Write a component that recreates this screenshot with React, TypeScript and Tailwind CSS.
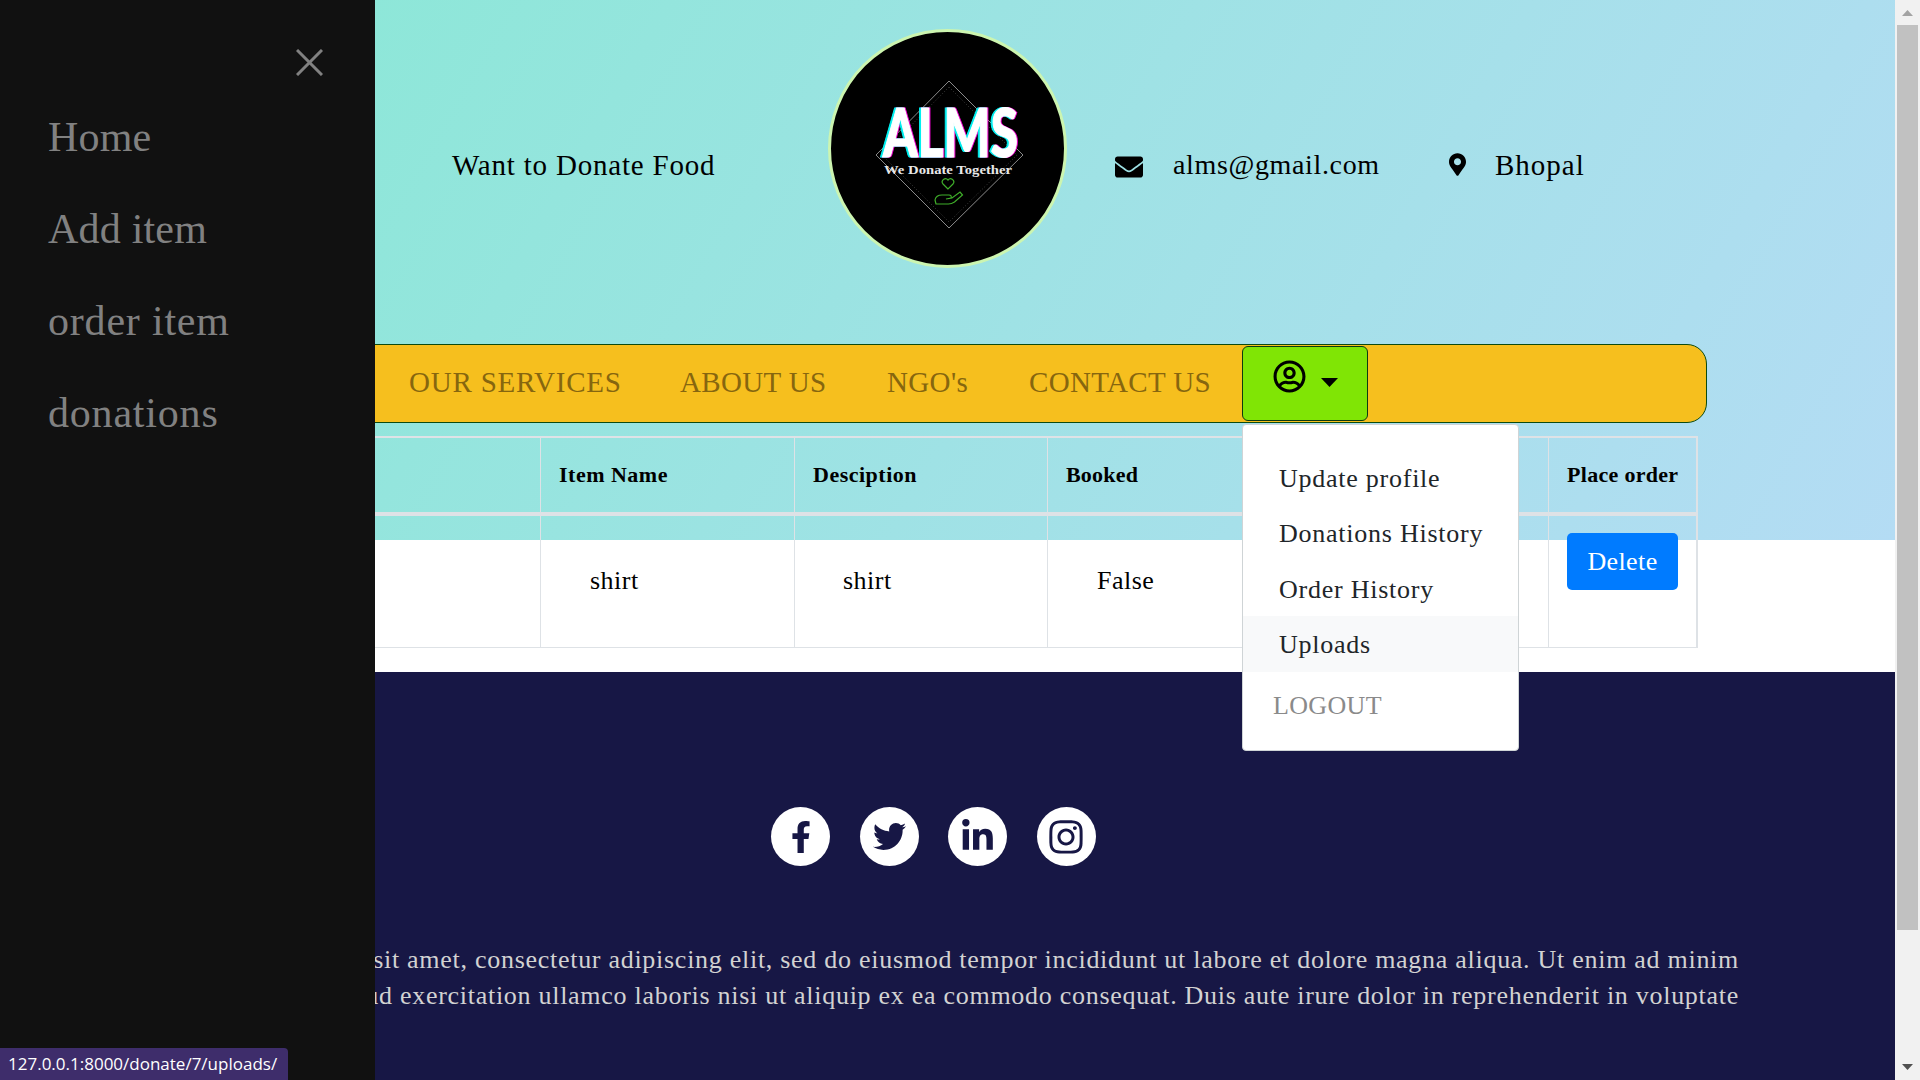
import React from 'react';
import {
  FaEnvelope,
  FaFacebookF,
  FaInstagram,
  FaLinkedinIn,
  FaMapMarkerAlt,
  FaRegUserCircle,
  FaTwitter,
} from 'react-icons/fa';

const serif = "font-['Liberation_Serif',serif]";

const Logo = () => (
  <svg viewBox="0 0 239 239" className="w-[239px] h-[239px] shrink-0">
    <circle cx="119.5" cy="119.5" r="118" fill="#000" stroke="#ccf5b0" strokeWidth="3" />
    <path d="M121 52 L195 126 L121 199 L48 126 Z" fill="none" stroke="#8a8a8a" strokeWidth="1" />
    <path d="M121 58 L189 126 L121 193 L54 126 Z" fill="none" stroke="#666" strokeWidth="0.6" strokeDasharray="1 2" />
    <text
      x="55"
      y="128"
      textLength="135"
      lengthAdjust="spacingAndGlyphs"
      fontFamily="Lato, sans-serif"
      fontWeight="900"
      fontSize="66"
      fill="#fff"
      stroke="#fff"
      strokeWidth="1.2"
      className="[filter:drop-shadow(-1.5px_0_0_#00f0f0)_drop-shadow(1.5px_0_0_#f000d0)]"
    >
      ALMS
    </text>
    <text x="56" y="145" textLength="128" lengthAdjust="spacingAndGlyphs" fontFamily="'Liberation Serif', serif" fontWeight="700" fontSize="13" fill="#e8e8e8">We Donate Together</text>
    <path d="M120 160 l-5 -5 a3.2 3.2 0 0 1 5 -4 a3.2 3.2 0 0 1 5 4 Z" fill="none" stroke="#3fae2a" strokeWidth="1.2" />
    <path d="M108 175 l-1 -4 q1 -5 7 -5 l7 0 q3 0 2 3 l-5 1 l6 -1 l8 -6 l2.5 3 l-8 7 q-3 2 -6 2 Z" fill="none" stroke="#3fae2a" strokeWidth="1.2" />
  </svg>
);

const Sidebar = () => (
  <aside className={`absolute left-0 top-0 z-20 h-full w-[375px] bg-[#111111] text-[#818181] ${serif}`}>
    <div className="flex justify-end pt-[49px] pr-[52px]">
      <svg viewBox="0 0 27 27" className="w-[27px] h-[27px]">
        <path d="M1 1 L26 26 M26 1 L1 26" stroke="#818181" strokeWidth="3" fill="none" />
      </svg>
    </div>
    <nav className="flex flex-col pl-[48px] pt-[41px] gap-[52px] text-[42px] leading-[40px] tracking-[0.2px]">
      <a>Home</a>
      <a>Add item</a>
      <a className="tracking-[0.8px]">order item</a>
      <a className="tracking-[0.8px]">donations</a>
    </nav>
  </aside>
);

const Dropdown = () => (
  <div className={`absolute left-0 top-[78px] z-10 w-[277px] h-[327px] rounded-[4px] border border-[#cfd4d6] bg-white pt-[25px] text-[#212529] text-[26px] tracking-[0.75px] ${serif}`}>
    <a className="flex items-center h-[55.4px] pl-[36px] pt-[2px]">Update profile</a>
    <a className="flex items-center h-[55.4px] pl-[36px] pt-[1px]">Donations History</a>
    <a className="flex items-center h-[55.4px] pl-[36px] pt-[2px]">Order History</a>
    <a className="flex items-center h-[55.4px] pl-[36px] pt-[2px] bg-[#f8f9fa]">Uploads</a>
    <a className="flex items-center h-[66px] pl-[30px] pt-[2px] text-[#8a8a8a] tracking-[0.35px]">LOGOUT</a>
  </div>
);

const Navbar = () => (
  <div className={`mt-[76px] flex items-center w-[1707px] h-[79px] pl-[408px] rounded-r-[20px] border border-[#0d4a10] bg-[#f6bf1e] text-[#86660f] text-[29px] tracking-[0.35px] ${serif}`}>
    <a className="w-[271px] pb-[2px] whitespace-nowrap tracking-[0.8px]">OUR SERVICES</a>
    <a className="w-[207px] pb-[2px] whitespace-nowrap">ABOUT US</a>
    <a className="w-[142px] pb-[2px] whitespace-nowrap">NGO's</a>
    <a className="w-[213px] pb-[2px] whitespace-nowrap">CONTACT US</a>
    <div className="relative">
      <button className="flex items-center w-[126px] h-[75px] pl-[30px] pb-[14px] rounded-[6px] border border-[#0d3a10] bg-[#80e505] text-black">
        <FaRegUserCircle className="w-[33px] h-[33px]" />
        <svg viewBox="0 0 17 9" className="ml-[15px] mt-[11px] w-[17px] h-[9px]">
          <path d="M0 0 H17 L8.5 9 Z" fill="#000" />
        </svg>
      </button>
      <Dropdown />
    </div>
  </div>
);

const Table = () => (
  <table className={`mt-[13px] ml-[33px] w-[1663px] table-fixed border-collapse text-black ${serif}`}>
    <colgroup>
      <col className="w-[254px]" />
      <col className="w-[253px]" />
      <col className="w-[254px]" />
      <col className="w-[253px]" />
      <col className="w-[253px]" />
      <col className="w-[248px]" />
      <col className="w-[148px]" />
    </colgroup>
    <thead>
      <tr className="h-[77px] text-[22px] font-bold tracking-[0.5px]">
        <th className="border-2 border-b-[4px] border-[#dee2e6] border-x-[1px]" />
        <th className="border-2 border-b-[4px] border-[#dee2e6] border-x-[1px]" />
        <th className="border-2 border-b-[4px] border-[#dee2e6] border-x-[1px] pl-[18px] pb-[2px] text-left">Item Name</th>
        <th className="border-2 border-b-[4px] border-[#dee2e6] border-x-[1px] pl-[18px] pb-[2px] text-left">Desciption</th>
        <th className="border-2 border-b-[4px] border-[#dee2e6] border-x-[1px] pl-[18px] pb-[2px] text-left tracking-[0.2px]">Booked</th>
        <th className="border-2 border-b-[4px] border-[#dee2e6] border-x-[1px]" />
        <th className="border-2 border-b-[4px] border-[#dee2e6] border-x-[1px] border-r-[2px] pl-[18px] pb-[2px] text-left whitespace-nowrap tracking-[0.3px]">Place order</th>
      </tr>
    </thead>
    <tbody>
      <tr className="h-[133px] text-[26px] tracking-[0.5px] align-top">
        <td className="border border-[#dee2e6]" />
        <td className="border border-[#dee2e6]" />
        <td className="border border-[#dee2e6] pl-[49px] pt-[45px]">shirt</td>
        <td className="border border-[#dee2e6] pl-[48px] pt-[45px]">shirt</td>
        <td className="border border-[#dee2e6] pl-[49px] pt-[45px]">False</td>
        <td className="border border-[#dee2e6]" />
        <td className="border border-[#dee2e6] border-r-[2px] pl-[18px] pt-[17px]">
          <button className="flex items-center justify-center w-[111px] h-[57px] rounded-[5px] bg-[#007bff] text-white text-[26px] tracking-[0.4px]">Delete</button>
        </td>
      </tr>
    </tbody>
  </table>
);

const socials = [
  { Icon: FaFacebookF, size: 'w-[32px] h-[32px]' },
  { Icon: FaTwitter, size: 'w-[33px] h-[33px]' },
  { Icon: FaLinkedinIn, size: 'w-[35px] h-[35px]' },
  { Icon: FaInstagram, size: 'w-[38px] h-[38px]' },
];

const Footer = () => (
  <footer className={`h-[408px] bg-[#171745] pt-[135px] ${serif}`}>
    <div className="flex pl-[771px] gap-[29.5px]">
      {socials.map(({ Icon, size }, i) => (
        <a key={i} className="flex items-center justify-center w-[59px] h-[59px] rounded-full bg-white text-[#171745]">
          <Icon className={size} />
        </a>
      ))}
    </div>
    <div className="mt-[76px] flex flex-col items-end pr-[156px] text-[26px] leading-[36px] text-[#d2d2d2] tracking-[0.72px] whitespace-nowrap">
      <p>Lorem ipsum dolor sit amet, consectetur adipiscing elit, sed do eiusmod tempor incididunt ut labore et dolore magna aliqua. Ut enim ad minim</p>
      <p>veniam, quis nostrud exercitation ullamco laboris nisi ut aliquip ex ea commodo consequat. Duis aute irure dolor in reprehenderit in voluptate</p>
    </div>
  </footer>
);

const Scrollbar = () => (
  <div className="flex flex-col items-center w-[25px] h-full shrink-0 bg-[#f1f1f1]">
    <svg viewBox="0 0 11 6" className="mt-[10px] w-[11px] h-[6px]">
      <path d="M5.5 0 L11 6 H0 Z" fill="#a3a3a3" />
    </svg>
    <div className="mt-[9px] w-[21px] h-[905px] bg-[#c1c1c1]" />
    <svg viewBox="0 0 11 6" className="mt-[134px] w-[11px] h-[6px]">
      <path d="M0 0 H11 L5.5 6 Z" fill="#505050" />
    </svg>
  </div>
);

const App = () => (
  <div className="relative flex h-[1080px] w-[1920px] overflow-hidden bg-white">
    <main className="w-[1895px] shrink-0">
      <section className="h-[540px] bg-[linear-gradient(120deg,#86e9d3_0%,#b4dcf4_100%)]">
        <div className={`flex items-start pt-[29px] pl-[452px] text-[28px] leading-[32px] text-black ${serif}`}>
          <span className="mt-[120px] w-[376px] whitespace-nowrap text-[29px] tracking-[0.8px]">Want to Donate Food</span>
          <Logo />
          <FaEnvelope className="mt-[124px] ml-[48px] w-[28px] h-[28px]" />
          <span className="mt-[120px] ml-[30px] w-[276px] whitespace-nowrap tracking-[0.65px]">alms@gmail.com</span>
          <FaMapMarkerAlt className="mt-[124px] w-[17px] h-[23px]" />
          <span className="mt-[120px] ml-[29px] whitespace-nowrap text-[29px] tracking-[1px]">Bhopal</span>
        </div>
        <Navbar />
        <Table />
      </section>
      <div className="h-[132px]" />
      <Footer />
    </main>
    <Scrollbar />
    <Sidebar />
    <div className="absolute left-0 bottom-0 z-30 flex items-center w-[288px] h-[32px] pl-[8px] rounded-tr-[4px] bg-[#3e2d6b] text-white text-[17px] font-['Open_Sans',sans-serif] whitespace-nowrap">
      127.0.0.1:8000/donate/7/uploads/
    </div>
  </div>
);

export default App;
